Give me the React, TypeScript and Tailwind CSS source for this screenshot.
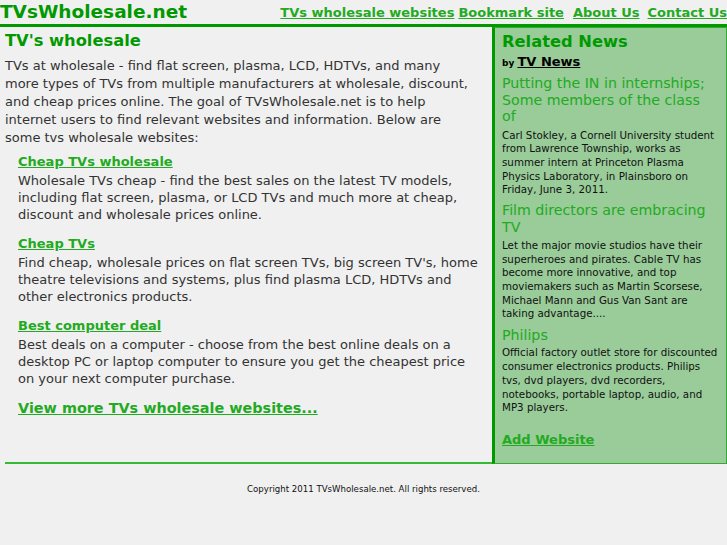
import React from "react";

const font = { fontFamily: '"DejaVu Sans", Verdana, sans-serif' };

export default function App() {
  return (
    <div className="w-[727px] h-[545px] bg-[#f0f0f0] text-[#333333] overflow-hidden" style={font}>
      <div className="flex items-end justify-between h-[24px] border-b-[3px] border-[#009900] box-content">
        <div className="text-[18.5px] font-bold text-[#009900] leading-[22px] pb-[1px]">TVsWholesale.net</div>
        <div className="flex text-[13px] font-bold leading-[20px] text-[#22aa22] pb-[1px]">
          <a className="underline mr-[4px]">TVs wholesale websites</a>
          <a className="underline mr-[9px]">Bookmark site</a>
          <a className="underline mr-[8px]">About Us</a>
          <a className="underline">Contact Us</a>
        </div>
      </div>
      <div className="flex">
        <div className="w-[492px] pl-[5px]">
          <div className="h-[437px] border-b-[2px] border-[#33bb33] pr-[14px]">
            <h1 className="text-[16.3px] font-bold text-[#009900] leading-[20px] pt-[4px] pb-[4px]">TV's wholesale</h1>
            <p className="text-[13px] leading-[18px] pt-[2px]">
              TVs at wholesale - find flat screen, plasma, LCD, HDTVs, and many more types of TVs from multiple manufacturers at wholesale, discount, and cheap prices online. The goal of TVsWholesale.net is to help internet users to find relevant websites and information. Below are some tvs wholesale websites:
            </p>
            <div className="pl-[13px] pt-[5px]">
              <div className="mb-[11px]">
                <a className="underline text-[13px] font-bold leading-[20px] text-[#22aa22] block">Cheap TVs wholesale</a>
                <p className="text-[13px] leading-[17px]">Wholesale TVs cheap - find the best sales on the latest TV models, including flat screen, plasma, or LCD TVs and much more at cheap, discount and wholesale prices online.</p>
              </div>
              <div className="mb-[11px]">
                <a className="underline text-[13px] font-bold leading-[20px] text-[#22aa22] block">Cheap TVs</a>
                <p className="text-[13px] leading-[17px]">Find cheap, wholesale prices on flat screen TVs, big screen TV's, home theatre televisions and systems, plus find plasma LCD, HDTVs and other electronics products.</p>
              </div>
              <div className="mb-[11px]">
                <a className="underline text-[13px] font-bold leading-[20px] text-[#22aa22] block">Best computer deal</a>
                <p className="text-[13px] leading-[17px]">Best deals on a computer - choose from the best online deals on a desktop PC or laptop computer to ensure you get the cheapest price on your next computer purchase.</p>
              </div>
              <a className="underline text-[14.4px] font-bold leading-[20px] text-[#22aa22] block">View more TVs wholesale websites...</a>
            </div>
          </div>
        </div>
        <div className="w-[235px] h-[437px] bg-[#99cc99] border-l-[3px] border-l-[#009900] border-y border-r border-[#33aa33] pl-[7px] pr-[7px]">
          <h2 className="text-[16.3px] font-bold text-[#009900] leading-[20px] pt-[4px]">Related News</h2>
          <div className="text-black leading-[18px]">
            <span className="text-[9px] font-bold">by </span>
            <a className="underline text-[13px] font-bold">TV News</a>
          </div>
          <div className="pt-[3px]">
            <h3 className="text-[14.2px] leading-[16.5px] text-[#22aa22] pr-[5px]">Putting the IN in internships; Some members of the class of</h3>
            <p className="text-[10.3px] leading-[13.7px] text-[#111111] pt-[4px]">Carl Stokley, a Cornell University student from Lawrence Township, works as summer intern at Princeton Plasma Physics Laboratory, in Plainsboro on Friday, June 3, 2011.</p>
          </div>
          <div className="pt-[5px]">
            <h3 className="text-[14.2px] leading-[16.5px] text-[#22aa22] pr-[5px]">Film directors are embracing TV</h3>
            <p className="text-[10.3px] leading-[13.65px] text-[#111111] pt-[4px]">Let the major movie studios have their superheroes and pirates. Cable TV has become more innovative, and top moviemakers such as Martin Scorsese, Michael Mann and Gus Van Sant are taking advantage....</p>
          </div>
          <div className="pt-[6px]">
            <h3 className="text-[14.2px] leading-[16.5px] text-[#22aa22] pr-[5px]">Philips</h3>
            <p className="text-[10.3px] leading-[13.7px] text-[#111111] pt-[3px]">Official factory outlet store for discounted consumer electronics products. Philips tvs, dvd players, dvd recorders, notebooks, portable laptop, audio, and MP3 players.</p>
          </div>
          <a className="underline text-[13px] font-bold leading-[20px] text-[#22aa22] block pt-[15px]">Add Website</a>
        </div>
      </div>
      <div className="text-center text-[8.6px] leading-[12px] text-[#111111] pt-[19px]">Copyright 2011 TVsWholesale.net. All rights reserved.</div>
    </div>
  );
}
